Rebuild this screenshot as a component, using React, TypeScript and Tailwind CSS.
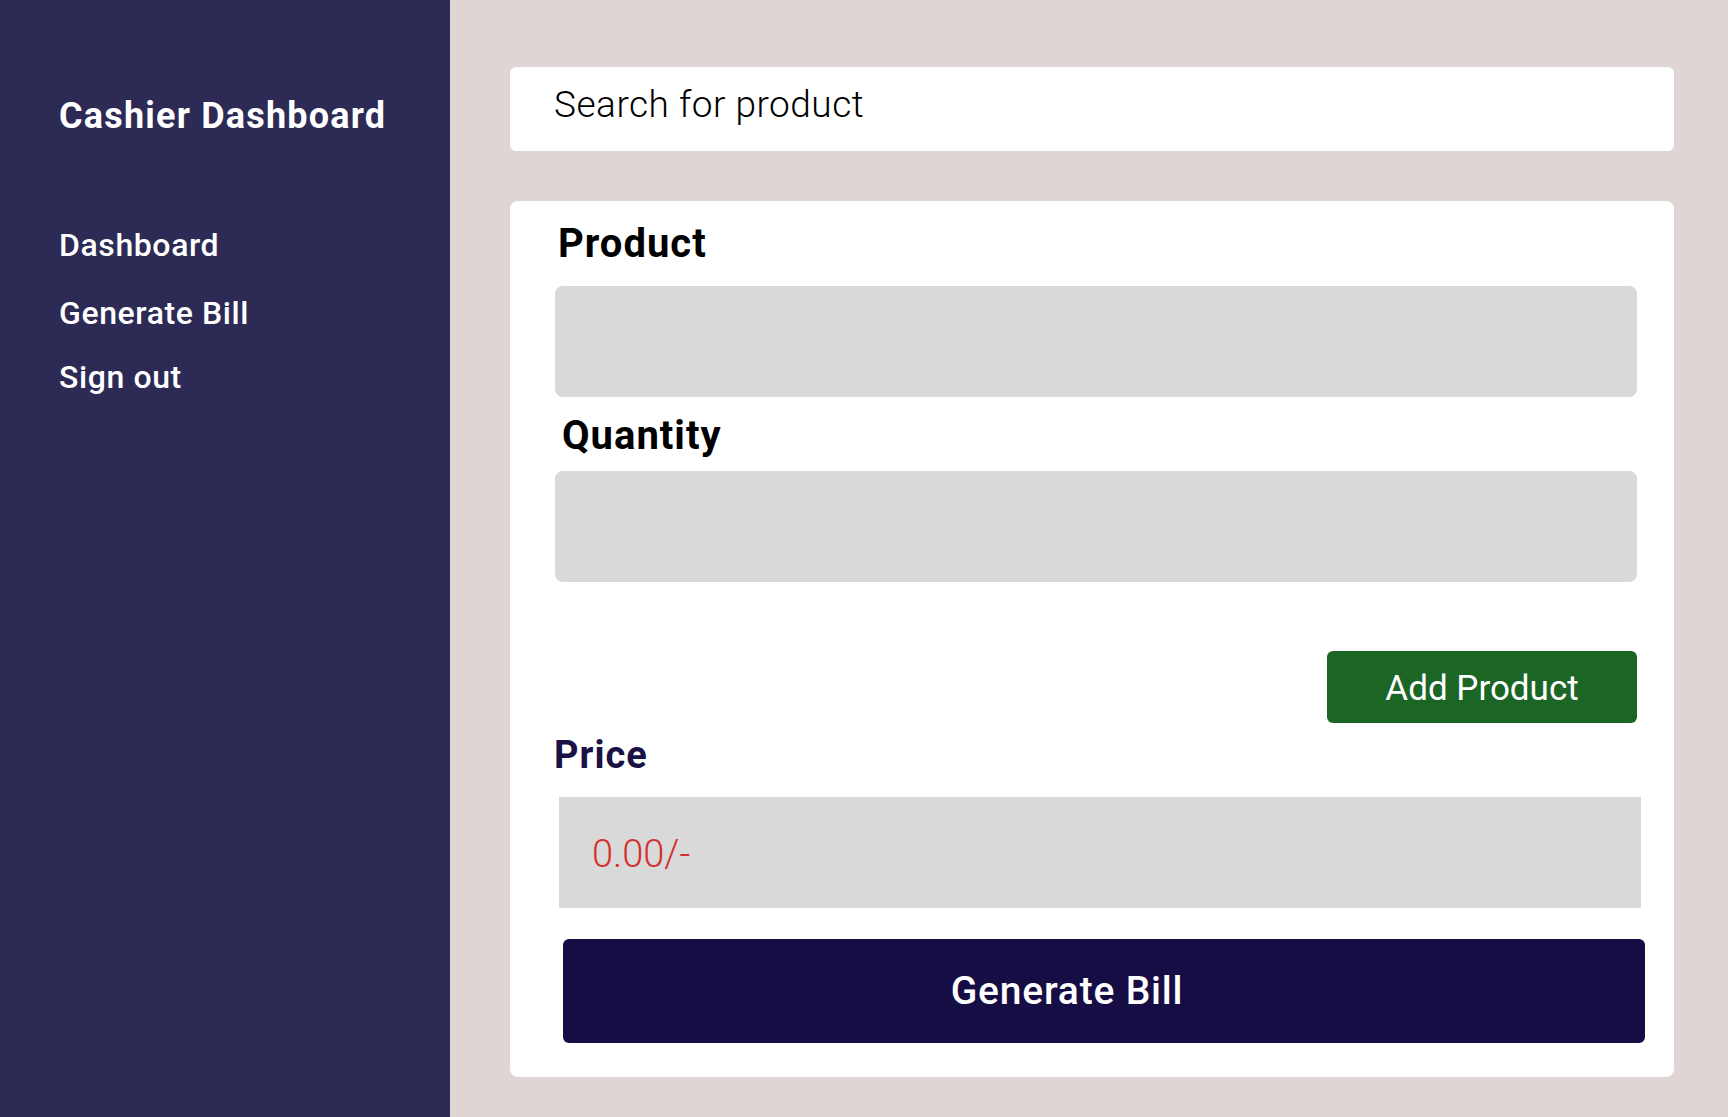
export default function App() {
  return (
    <div className="flex min-h-[1117px] w-full font-['Roboto',sans-serif]">
      <aside className="w-[450px] shrink-0 bg-[#2d2b55] pl-[59px] pt-[95px] text-white">
        <h1 className="text-[36px] font-bold leading-[42px] tracking-[1.2px]">Cashier Dashboard</h1>
        <nav className="mt-[89px] flex flex-col text-[32px] font-medium leading-[38px] tracking-[0.6px]">
          <a className="block">Dashboard</a>
          <a className="mt-[30px] block">Generate Bill</a>
          <a className="mt-[26px] block">Sign out</a>
        </nav>
      </aside>

      <main className="flex-1 bg-[#dfd5d4] pl-[60px] pr-[54px] pt-[67px] pb-[40px]">
        <div className="flex h-[84px] items-start rounded-md bg-white pl-[44px] pt-[16px]">
          <input
            placeholder="Search for product"
            className="w-full bg-transparent text-[37px] font-light leading-[44px] tracking-[0.5px] text-black placeholder:text-black focus:outline-none"
          />
        </div>

        <div className="mt-[50px] flex flex-col rounded-lg bg-white pb-[34px] pt-[19px]">
          <label className="ml-[48px] text-[40px] font-bold leading-[47px] tracking-[1px] text-black">Product</label>
          <div className="ml-[45px] mr-[37px] mt-[19px] h-[111px] rounded-lg bg-[#d9d9d9]" />

          <label className="ml-[52px] mt-[15px] text-[40px] font-bold leading-[47px] tracking-[1px] text-black">Quantity</label>
          <div className="ml-[45px] mr-[37px] mt-[12px] h-[111px] rounded-lg bg-[#d9d9d9]" />

          <div className="mr-[37px] mt-[69px] flex justify-end">
            <button className="h-[72px] w-[310px] rounded-md bg-[#1b6525] pt-[3px] text-[35px] leading-none text-white">
              Add Product
            </button>
          </div>

          <label className="ml-[44px] mt-[10px] text-[38px] font-bold leading-[44px] tracking-[1px] text-[#1a1145]">Price</label>
          <div className="ml-[49px] mr-[33px] mt-[20px] flex h-[111px] items-center bg-[#d9d9d9] pl-[33px] pt-[4px]">
            <span className="text-[38px] font-light text-[#d32f2f]">0.00/-</span>
          </div>

          <button className="ml-[53px] mr-[29px] mt-[31px] h-[104px] rounded-md bg-[#170d45] pr-[74px] text-[39px] font-medium tracking-[0.8px] text-white">
            Generate Bill
          </button>
        </div>
      </main>
    </div>
  );
}
